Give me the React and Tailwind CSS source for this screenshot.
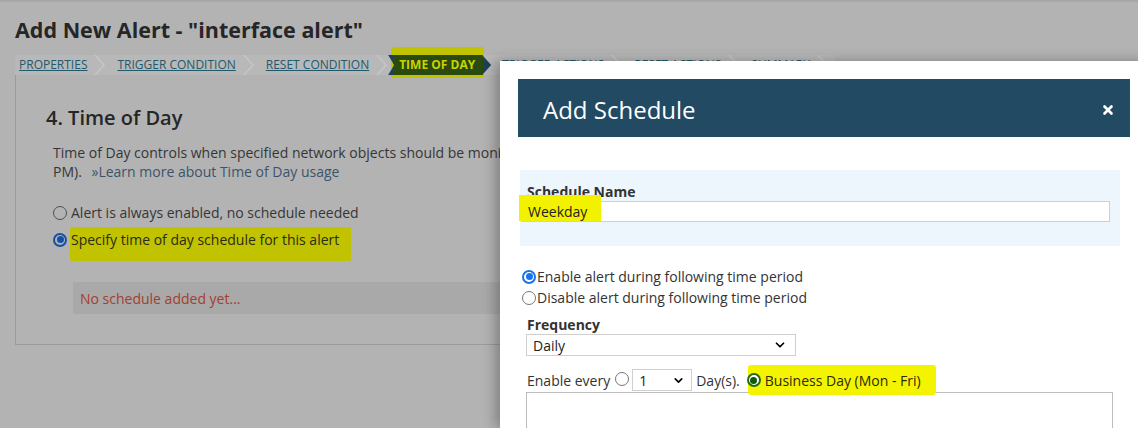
import { ChevronDown, X } from 'lucide-react'

function Chevron() {
  return (
    <svg width="12" height="20" viewBox="0 0 12 20" className="shrink-0">
      <polyline points="1,0 10,10 1,20" fill="none" stroke="#c6c6c6" strokeWidth="1.5" />
    </svg>
  )
}

function Radio({ checked, tone = 'blue' }) {
  const ring = {
    blue: 'border-[#1a73e8]',
    dim: 'border-[#1551a3]',
    green: 'border-[#1f6b12]',
  }[tone]
  const dot = {
    blue: 'bg-[#1a73e8]',
    dim: 'bg-[#1551a3]',
    green: 'bg-[#0f5a08]',
  }[tone]
  if (!checked) {
    const border = tone === 'dim' ? 'border-[#505050]' : 'border-[#767676]'
    return <span className={`inline-block h-[14px] w-[14px] shrink-0 rounded-full border ${border}`} />
  }
  return (
    <span className={`flex h-[14px] w-[14px] shrink-0 items-center justify-center rounded-full border-2 ${ring} ${tone === 'dim' ? 'bg-[#b3b3b3]' : 'bg-white'}`}>
      <span className={`h-[7px] w-[7px] rounded-full ${dot}`} />
    </span>
  )
}

export default function App() {
  const crumbs = ['PROPERTIES', 'TRIGGER CONDITION', 'RESET CONDITION']
  const rest = ['TRIGGER ACTIONS', 'RESET ACTIONS', 'SUMMARY']

  return (
    <div className="relative h-[428px] w-[1138px] overflow-hidden bg-[#b3b3b3] font-['Open_Sans',sans-serif]">
      <div className="h-[3px] bg-gradient-to-b from-[#a2a2a2] to-[#b3b3b3]" />

      {/* Page (dimmed behind the dialog) */}
      <div className="px-[15px] pt-[12px]">
        <h1 className="text-[21.5px] font-bold leading-[30px] text-[#262626]">
          Add New Alert - "interface alert"
        </h1>

        {/* Wizard steps */}
        <div className="mt-[10px] flex h-[20px] w-[820px] items-center whitespace-nowrap bg-[#b8b8b8] text-[12px] leading-[20px]">
          {crumbs.map((c) => (
            <div key={c} className="flex items-center">
              <span className="ml-[4px] text-[#23596c] underline">{c}</span>
              <span className="mx-[7px]"><Chevron /></span>
            </div>
          ))}
          <div className="relative -ml-[7px] mr-[7px]">
            <div className="absolute left-[3px] -right-[-7px] -top-[8px] -bottom-[3px] rounded-[3px] bg-[#c0c300]" />
            <div className="relative flex h-[20px] items-center bg-[#1c4158] pl-[11px] pr-[16px] [clip-path:polygon(0_0,calc(100%-9px)_0,100%_50%,calc(100%-9px)_100%,0_100%,6px_50%)]">
              <span className="absolute inset-y-0 left-[5px] right-[8px] bg-[#2b4a10]" />
              <span className="relative font-bold text-[#c8d400]">TIME OF DAY</span>
            </div>
          </div>
          {rest.map((c) => (
            <div key={c} className="flex items-center">
              <span className="ml-[4px] text-[#23596c] underline">{c}</span>
              <span className="mx-[7px]"><Chevron /></span>
            </div>
          ))}
        </div>

        {/* Step content */}
        <div className="h-[270px] w-[1108px] border border-t-0 border-[#9b9b9b] pl-[30px] pt-[29px]">
          <h2 className="text-[20px] font-semibold leading-[28px] text-[#262626]">4. Time of Day</h2>
          <p className="ml-[7px] mt-[11px] whitespace-nowrap text-[14px] leading-[19px] text-[#363636]">
            Time of Day controls when specified network objects should be monitored (e.g. 8:00 AM - 5:00
            <br />
            PM). <span className="ml-[6px] text-[#3b546c]">»Learn more about Time of Day usage</span>
          </p>
          <div className="ml-[7px] mt-[18px] text-[14px] text-[#363636]">
            <label className="flex h-[27px] items-center gap-[4px]">
              <Radio tone="dim" />
              <span>Alert is always enabled, no schedule needed</span>
            </label>
            <label className="flex h-[27px] items-center gap-[4px]">
              <Radio checked tone="dim" />
              <span className="relative">
                <span className="absolute -left-[1px] -right-[12px] -top-[2px] -bottom-[11px] rounded-[2px] bg-[#c1c300]" />
                <span className="relative text-[#2c2c10]">Specify time of day schedule for this alert</span>
              </span>
            </label>
          </div>
          <div className="ml-[27px] mt-[29px] flex h-[32px] w-[1040px] items-center bg-[#a9a9a9] pl-[7px] text-[14px] text-[#a3402f]">
            No schedule added yet...
          </div>
        </div>
      </div>

      {/* Add Schedule dialog */}
      <div className="absolute bottom-0 left-[500px] top-[61px] w-[650px] bg-white pl-[18px] pt-[18px] shadow-[-5px_0_12px_rgba(0,0,0,0.28)]">
        <div className="flex h-[58px] w-[612px] items-center justify-between bg-[#234a63] pl-[25px] pr-[15px] pt-[3px]">
          <span className="text-[24px] leading-none text-white">Add Schedule</span>
          <X size={14} strokeWidth={4.5} className="text-white" />
        </div>

        <div className="ml-[2px] mt-[33px] h-[76px] w-[600px] bg-[#eef6fd] pt-[12px]">
          <div className="ml-[7px] text-[14px] font-bold leading-[19px] text-[#333]">Schedule Name</div>
          <div className="relative ml-[1px] flex h-[21px] w-[589px] items-center border border-[#cfcfcf] bg-white pl-[6px] text-[14px] text-[#222]">
            <span className="absolute -left-[3px] -top-[7px] h-[26px] w-[82px] bg-[#f2f200]" />
            <span className="relative">Weekday</span>
          </div>
        </div>

        <div className="ml-[4px] mt-[20px] text-[14px] leading-[21px] text-[#333]">
          <label className="flex items-center gap-[1px]">
            <Radio checked />
            <span>Enable alert during following time period</span>
          </label>
          <label className="flex items-center gap-[1px]">
            <Radio />
            <span>Disable alert during following time period</span>
          </label>
        </div>

        <div className="ml-[9px] mt-[8px] text-[14px] font-bold leading-[18px] text-[#333]">Frequency</div>
        <div className="ml-[8px] flex h-[22px] w-[270px] items-center justify-between border border-[#cfcfcf] pl-[6px] pr-[8px] text-[14px] text-[#222]">
          <span>Daily</span>
          <ChevronDown size={14} strokeWidth={3} className="text-black" />
        </div>

        <div className="ml-[9px] mt-[13px] flex h-[22px] items-center text-[14px] text-[#333]">
          <span>Enable every</span>
          <span className="ml-[5px]"><Radio /></span>
          <div className="ml-[3px] flex h-[22px] w-[60px] items-center justify-between border border-[#cfcfcf] pl-[6px] pr-[6px] text-[#222]">
            <span>1</span>
            <ChevronDown size={13} strokeWidth={3} className="text-black" />
          </div>
          <span className="ml-[4px]">Day(s).</span>
          <span className="relative ml-[7px] flex items-center gap-[4px]">
            <span className="absolute left-[1px] -right-[15px] -top-[5px] -bottom-[4px] rounded-[3px] bg-[#f4f400]" />
            <span className="relative"><Radio checked tone="green" /></span>
            <span className="relative text-[#2b2b00]">Business Day (Mon - Fri)</span>
          </span>
        </div>

        <div className="ml-[8px] mt-[1px] h-[60px] w-[587px] border border-[#bdbdbd]" />
      </div>
    </div>
  )
}
